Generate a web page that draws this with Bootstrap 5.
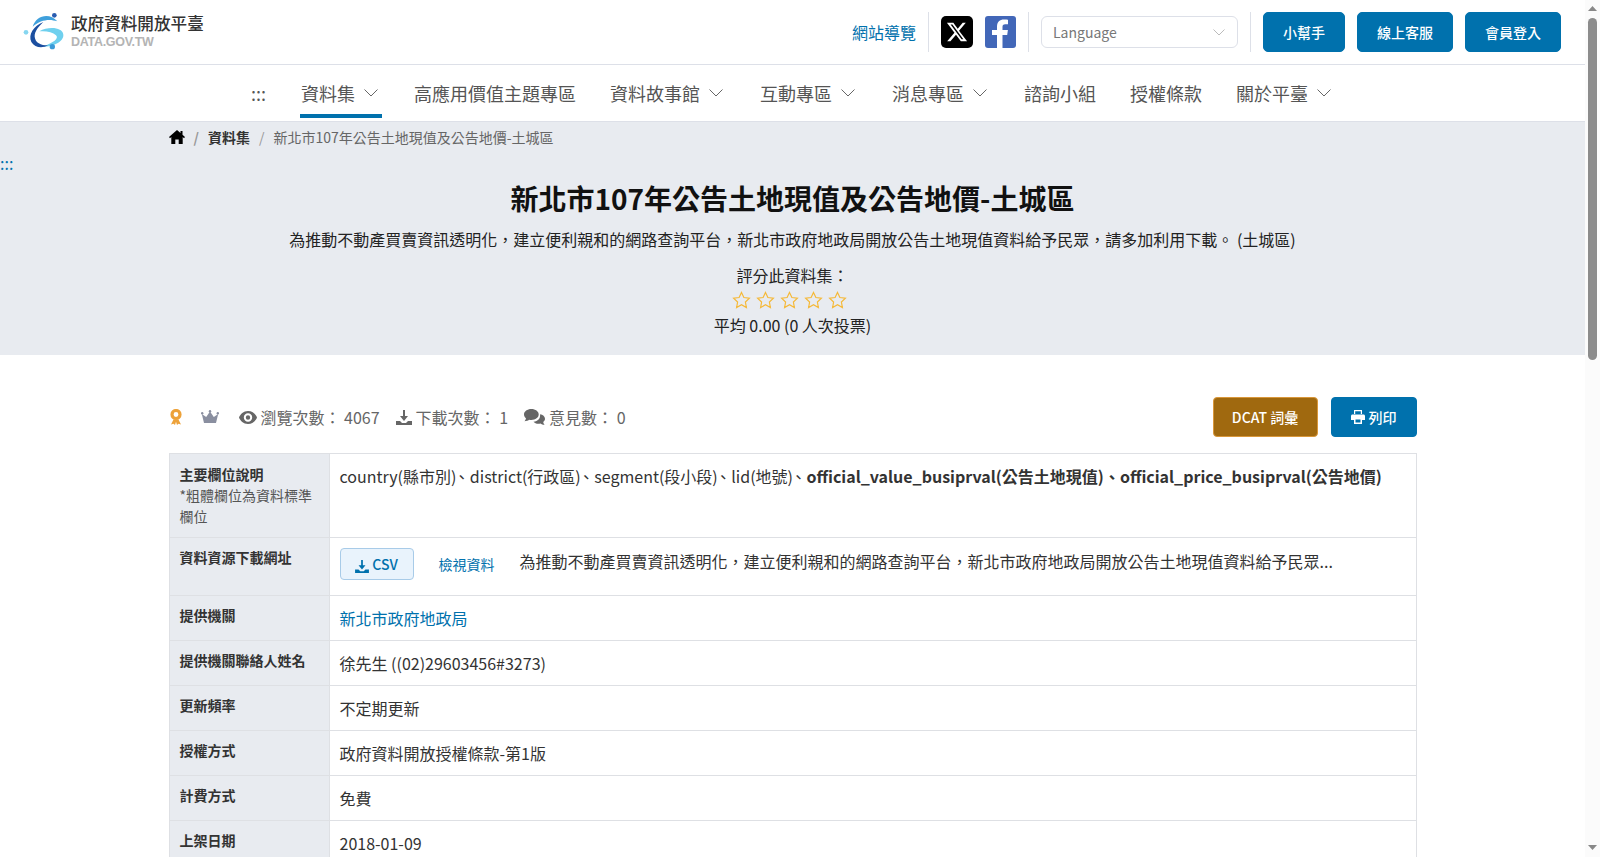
<!DOCTYPE html>
<html lang="zh-Hant">
<head>
  <meta charset="UTF-8">
  <title>新北市107年公告土地現值及公告地價-土城區</title>
  <link rel="stylesheet" href="https://cdn.jsdelivr.net/npm/bootstrap@5.3.1/dist/css/bootstrap.min.css">
  <style>
    body { font-family: "Noto Sans CJK TC", "Noto Sans", sans-serif; font-size: 16px; color: #222; padding-right: 15px; }
    a { text-decoration: none; color: #0071ad; }
    .page-wrap { min-height: 2062px; }
    /* window scrollbar, the render has none of its own */
    .win-scroll { position: fixed; top: 0; right: 0; bottom: 0; width: 15px; padding: 6px 3px 7px; background: #fbfbfb; }
    .win-thumb { height: 342px; margin-top: 7px; background: #8c8c8c; border-radius: 5px; }
    .top-bar { height: 65px; padding: 0 24px 0 20px; border-bottom: 1px solid #dde0e8; }
    .logo-text { margin: 0 0 3px 1px; }
    .logo-name { font-size: 16.6px; font-weight: 500; line-height: 20px; color: #333; }
    .logo-sub { font-family: "Liberation Sans", sans-serif; font-size: 12.5px; font-weight: 700; line-height: 13px; color: #b4b4b4; letter-spacing: -.3px; margin-top: 3px; }
    .bar-sep { width: 1px; height: 40px; background: #dde0e8; margin: 0 12px; }
    .social-x { width: 32px; height: 32px; background: #000; border-radius: 5px; }
    .social-fb { width: 31px; height: 32px; background: #4267b8; border-radius: 3px; margin-left: 12px; }
    .lang-pick { width: 197px; height: 32px; padding: 0 32px 0 11px; font-size: 14px; color: #777; border-color: #dde0e8;
      background-image: url("data:image/svg+xml,%3Csvg xmlns='http://www.w3.org/2000/svg' width='12' height='7'%3E%3Cpath d='M.5.5 6 6 11.500.5' fill='none' stroke='%23bbb'/%3E%3C/svg%3E");
      background-size: 12px 7px; }
    .head-btn { height: 40px; padding: 0 19px; font-size: 14px; font-weight: 500; line-height: 38px; background: #0071ad; border-color: #0071ad; color: #fff; border-radius: 5px; }
    .head-btn + .head-btn { margin-left: 12px; }
    .main-nav { height: 57px; border-bottom: 1px solid #dde0e8; }
    .main-nav .nav-link { height: 53px; margin: 0 14px; padding: 6px 3px 0; display: flex; align-items: center; gap: 9px; color: #555; font-size: 18px; line-height: 48px; border-bottom: 4px solid transparent; }
    .main-nav .has-caret { padding-right: 5px; margin-right: 15px; }
    .main-nav .nav-link.is-on { border-bottom-color: #0071ad; margin-left: 17px; padding-left: 1px; padding-right: 4px; }
    .hero-band { background: #e8ebf0; height: 233px; position: relative; }
    .sheet-box { width: 1248px; }
    .hero-band .breadcrumb { --bs-breadcrumb-item-padding-x: 9px; --bs-breadcrumb-divider-color: #999; font-size: 14px; height: 30px; align-items: center; margin: 0; }
    .hero-band .breadcrumb-item, .hero-band .breadcrumb-item a { color: #666; }
    .hero-band .breadcrumb-item a { color: #333; }
    .skip-dots { position: absolute; left: 0; top: 31px; font-size: 16px; line-height: 20px; }
    .hero-title { font-size: 28px; font-weight: 700; line-height: 40px; margin: 26px 0 0; color: #111; }
    .hero-desc { margin: 9px 0 0; line-height: 24px; color: #222; }
    .rate-label { margin: 12px 0 0; line-height: 24px; }
    .star-row { height: 24px; gap: 5px; margin-top: 1px; padding-right: 7px; }
    .rate-avg { line-height: 26px; }
    .stat-row { height: 98px; padding: 26px 0 0; color: #666; }
    .medal-ico { margin-right: 18px; }
    .crown-ico { margin-right: 20px; }
    .stat-item { display: flex; align-items: center; gap: 4px; margin-right: 16px; }
    .dcat-btn { height: 40px; width: 105px; padding: 0; font-size: 14px; font-weight: 500; background: #a0690f; border-color: #d9973a; color: #fff; border-radius: 4px; }
    .print-btn { height: 40px; width: 86px; padding: 0; font-size: 14px; font-weight: 500; background: #0071ad; border-color: #0071ad; color: #fff; border-radius: 4px; margin-left: 13px; }
    .info-tbl { margin: 0; --bs-border-color: #dee0e4; }
    .info-tbl th { width: 160px; background: #e8ebf0; font-size: 14px; font-weight: 700; padding: 10px; line-height: 21px; color: #333; }
    .info-tbl tr + tr th { padding-top: 9px; padding-bottom: 11px; }
    .info-tbl th span { font-weight: 400; color: #555; }
    .info-tbl td { padding: 10px; line-height: 24px; color: #333; }
    .info-tbl .dl-row td { padding-bottom: 15px; }
    .tight-sep { margin-left: -2.5px; }
    .csv-btn { width: 74px; height: 32px; padding: 0; font-size: 14px; font-weight: 500; line-height: 30px; background: #e9f3fc; border-color: #a8cbe8; color: #0071ad; border-radius: 4px; }
    .view-link { font-size: 14px; margin: 0 25px; }
    .dl-note { margin-bottom: 7px; }
  </style>
</head>
<body>
<div class="win-scroll d-flex flex-column">
  <svg width="9" height="5" viewBox="0 0 9 5" class="flex-shrink-0"><path d="M4.500 0 9 5H0z" fill="#888"/></svg>
  <div class="win-thumb flex-shrink-0"></div>
  <svg width="9" height="5" viewBox="0 0 9 5" class="flex-shrink-0 mt-auto"><path d="M4.500 5 9 0H0z" fill="#888"/></svg>
</div>
<div class="page-wrap">
  <header class="top-bar d-flex align-items-center">
    <a href="#" class="d-flex align-items-center">
      <svg width="50" height="44" viewBox="0 0 150 132">
        <path d="M58 64C86 48 128 52 130 74 132 94 100 110 70 110 100 98 118 86 108 76 98 66 78 62 58 64z" fill="#6fd0ee"/>
        <path d="M38 50C48 16 88 6 112 34 90 26 62 28 38 50z" fill="#3fa0dc"/>
        <path d="M70 36C40 48 24 74 34 96c10 18 34 20 50 10-22 0-38-8-40-26-1-16 12-30 26-44z" fill="#1c4fa0"/>
        <circle cx="103" cy="16" r="7" fill="#2a5cb0"/>
        <circle cx="18" cy="67" r="7" fill="#86d6f0"/>
        <circle cx="97" cy="110" r="8" fill="#3a9bd8"/>
      </svg>
      <span class="logo-text d-block">
        <span class="logo-name d-block">政府資料開放平臺</span>
        <span class="logo-sub d-block">DATA.GOV.TW</span>
      </span>
    </a>
    <a href="#" class="ms-auto">網站導覽</a>
    <span class="bar-sep"></span>
    <a href="#" class="social-x d-flex align-items-center justify-content-center">
      <svg width="22" height="22" viewBox="0 0 24 24"><path fill="#fff" d="M18.200 2h3.400l-7.400 8.500L23 22h-6.800l-5.300-7-6.100 7H1.300l7.900-9.100L1 2h7l4.800 6.400L18.200 2zm-1.200 18h1.900L7 3.900H5L17 20z"/></svg>
    </a>
    <a href="#" class="social-fb d-flex align-items-end justify-content-center overflow-hidden">
      <svg width="20" height="29" viewBox="0 0 20 29"><path fill="#fff" d="M6 29V16H1v-5h5V7.500C6 3 8.800.500 13 .500c1.900 0 3.500.1 4 .2v4.600h-2.700c-2.200 0-2.800 1.100-2.800 2.700V11h5.400l-.7 5h-4.700v13H6z"/></svg>
    </a>
    <span class="bar-sep"></span>
    <select class="form-select lang-pick"><option>Language</option></select>
    <span class="bar-sep"></span>
    <a href="#" class="btn head-btn">小幫手</a>
    <a href="#" class="btn head-btn">線上客服</a>
    <a href="#" class="btn head-btn">會員登入</a>
  </header>

  <nav class="main-nav">
    <ul class="nav justify-content-center">
      <li class="nav-item"><a class="nav-link" href="#">:::</a></li>
      <li class="nav-item"><a class="nav-link has-caret is-on" href="#">資料集 <svg width="14" height="8" viewBox="0 0 14 8"><path d="M.5.5 7 7l6.500-6.500" fill="none" stroke="#666"/></svg></a></li>
      <li class="nav-item"><a class="nav-link" href="#">高應用價值主題專區</a></li>
      <li class="nav-item"><a class="nav-link has-caret" href="#">資料故事館 <svg width="14" height="8" viewBox="0 0 14 8"><path d="M.5.5 7 7l6.500-6.500" fill="none" stroke="#666"/></svg></a></li>
      <li class="nav-item"><a class="nav-link has-caret" href="#">互動專區 <svg width="14" height="8" viewBox="0 0 14 8"><path d="M.5.5 7 7l6.500-6.500" fill="none" stroke="#666"/></svg></a></li>
      <li class="nav-item"><a class="nav-link has-caret" href="#">消息專區 <svg width="14" height="8" viewBox="0 0 14 8"><path d="M.5.5 7 7l6.500-6.500" fill="none" stroke="#666"/></svg></a></li>
      <li class="nav-item"><a class="nav-link" href="#">諮詢小組</a></li>
      <li class="nav-item"><a class="nav-link" href="#">授權條款</a></li>
      <li class="nav-item"><a class="nav-link has-caret" href="#">關於平臺 <svg width="14" height="8" viewBox="0 0 14 8"><path d="M.5.5 7 7l6.500-6.500" fill="none" stroke="#666"/></svg></a></li>
    </ul>
  </nav>

  <section class="hero-band text-center">
    <a href="#" class="skip-dots">:::</a>
    <div class="sheet-box mx-auto">
      <ol class="breadcrumb">
        <li class="breadcrumb-item"><a href="#"><svg width="16" height="14" viewBox="0 0 16 14" class="d-block"><path fill="#000" d="M8 0 0 7l1 1.200L2.300 7v7h4V9.500h3.400V14h4V7L15 8.200 16 7l-2.500-2.200V1h-2v2L8 0z"/></svg></a></li>
        <li class="breadcrumb-item fw-bold"><a href="#">資料集</a></li>
        <li class="breadcrumb-item active">新北市107年公告土地現值及公告地價-土城區</li>
      </ol>
    </div>
    <h1 class="hero-title">新北市107年公告土地現值及公告地價-土城區</h1>
    <p class="hero-desc">為推動不動產買賣資訊透明化，建立便利親和的網路查詢平台，新北市政府地政局開放公告土地現值資料給予民眾，請多加利用下載。 (土城區)</p>
    <div class="rate-label">評分此資料集：</div>
    <div class="star-row d-flex justify-content-center align-items-center" id="stars"></div>
    <div class="rate-avg">平均 0.00 (0 人次投票)</div>
  </section>

  <main class="sheet-box mx-auto">
    <div class="stat-row d-flex align-items-center">
      <svg class="medal-ico" width="14" height="16" viewBox="0 0 14 16"><circle cx="7" cy="5.500" r="4" fill="none" stroke="#eda23a" stroke-width="3.200"/><path d="M4.500 10.500 2 15.500l2.500-.8L6 16l1-3.300 1 3.300 1.500-1.300 2.500.8-2.500-5z" fill="#eda23a"/></svg>
      <svg class="crown-ico" width="18" height="14" viewBox="0 0 18 14"><path fill="#8a8fa0" d="M3 13 .8 4l4.400 3L9 1.500 12.800 7l4.400-3L15 13H3z"/><circle cx="1.200" cy="3.200" r="1.200" fill="#8a8fa0"/><circle cx="9" cy="1.200" r="1.200" fill="#8a8fa0"/><circle cx="16.800" cy="3.200" r="1.200" fill="#8a8fa0"/></svg>
      <span class="stat-item"><svg width="18" height="13" viewBox="0 0 18 13"><path fill="#666" fill-rule="evenodd" d="M9 0c4.500 0 7.800 3.300 9 6.500C16.800 9.700 13.500 13 9 13S1.200 9.700 0 6.500C1.200 3.300 4.500 0 9 0zm0 2.300a4.200 4.200 0 1 0 0 8.400 4.200 4.200 0 0 0 0-8.400zm0 2a2.200 2.200 0 1 1 0 4.400 2.200 2.200 0 0 1 0-4.400z"/></svg>瀏覽次數： 4067</span>
      <span class="stat-item"><svg width="16" height="15" viewBox="0 0 16 15"><path fill="#666" d="M7 0h2v6h3L8 11 4 6h3V0zM0 11h4l2 2h4l2-2h4v4H0v-4z"/></svg>下載次數： 1</span>
      <span class="stat-item"><svg width="21" height="17" viewBox="0 0 20 16"><path fill="#666" d="M7 0c3.900 0 7 2.300 7 5.200s-3.100 5.200-7 5.200c-.8 0-1.500-.1-2.200-.3C3.800 11 2.300 11.500.5 11.500c.8-.8 1.300-1.700 1.400-2.700C.7 7.900 0 6.600 0 5.200 0 2.300 3.100 0 7 0zm8.300 5c2.700.4 4.700 2.200 4.700 4.300 0 1.200-.6 2.300-1.700 3.100.1.900.6 1.800 1.300 2.600-1.600 0-3-.5-3.900-1.300-.6.200-1.300.3-2 .3-2 0-3.700-.8-4.700-2 4 .1 6.800-3 6.300-7z"/></svg>意見數： 0</span>
      <a href="#" class="btn dcat-btn ms-auto d-flex align-items-center justify-content-center">DCAT 詞彙</a>
      <a href="#" class="btn print-btn d-flex align-items-center justify-content-center gap-1"><svg width="14" height="14" viewBox="0 0 14 14"><path fill="#fff" d="M3 0h8v4H9.800V1.300H4.200V4H3V0zM1.500 4.500h11c.8 0 1.500.7 1.500 1.500v4h-3v4H3v-4H0V6c0-.8.700-1.500 1.500-1.500zm3 5V12.500h5V9.500h-5z"/></svg>列印</a>
    </div>

    <table class="table table-bordered info-tbl">
      <tbody>
        <tr>
          <th>主要欄位說明<br><span>*粗體欄位為資料標準欄位</span></th>
          <td>country(縣市別)<span class="tight-sep">、</span>district(行政區)<span class="tight-sep">、</span>segment(段小段)<span class="tight-sep">、</span>lid(地號)<span class="tight-sep">、</span><b>official_value_busiprval(公告土地現值)、official_price_busiprval(公告地價)</b></td>
        </tr>
        <tr class="dl-row">
          <th>資料資源下載網址</th>
          <td>
            <div class="d-flex align-items-center">
              <a href="#" class="btn csv-btn"><svg width="14" height="13" viewBox="0 0 16 15"><path fill="#0071ad" d="M7 0h2v6h3L8 11 4 6h3V0zM0 11h4l2 2h4l2-2h4v4H0v-4z"/></svg> CSV</a>
              <a href="#" class="view-link">檢視資料</a>
              <span class="dl-note">為推動不動產買賣資訊透明化，建立便利親和的網路查詢平台，新北市政府地政局開放公告土地現值資料給予民眾...</span>
            </div>
          </td>
        </tr>
        <tr><th>提供機關</th><td><a href="#">新北市政府地政局</a></td></tr>
        <tr><th>提供機關聯絡人姓名</th><td>徐先生 ((02)29603456#3273)</td></tr>
        <tr><th>更新頻率</th><td>不定期更新</td></tr>
        <tr><th>授權方式</th><td>政府資料開放授權條款-第1版</td></tr>
        <tr><th>計費方式</th><td>免費</td></tr>
        <tr><th>上架日期</th><td>2018-01-09</td></tr>
      </tbody>
    </table>
  </main>
</div>
<script>
// five empty rating stars
const starSvg = '<svg width="19" height="18" viewBox="0 0 19 18"><path d="M9.500 1.500l2.400 5 5.500.7-4 3.800 1 5.500-4.900-2.700-4.900 2.700 1-5.500-4-3.800 5.500-.7z" fill="none" stroke="#f5b939" stroke-width="1.200"/></svg>';
document.getElementById('stars').innerHTML = starSvg.repeat(5);
</script>
<script src="https://cdn.jsdelivr.net/npm/bootstrap@5.3.1/dist/js/bootstrap.bundle.min.js"></script>
</body>
</html>
